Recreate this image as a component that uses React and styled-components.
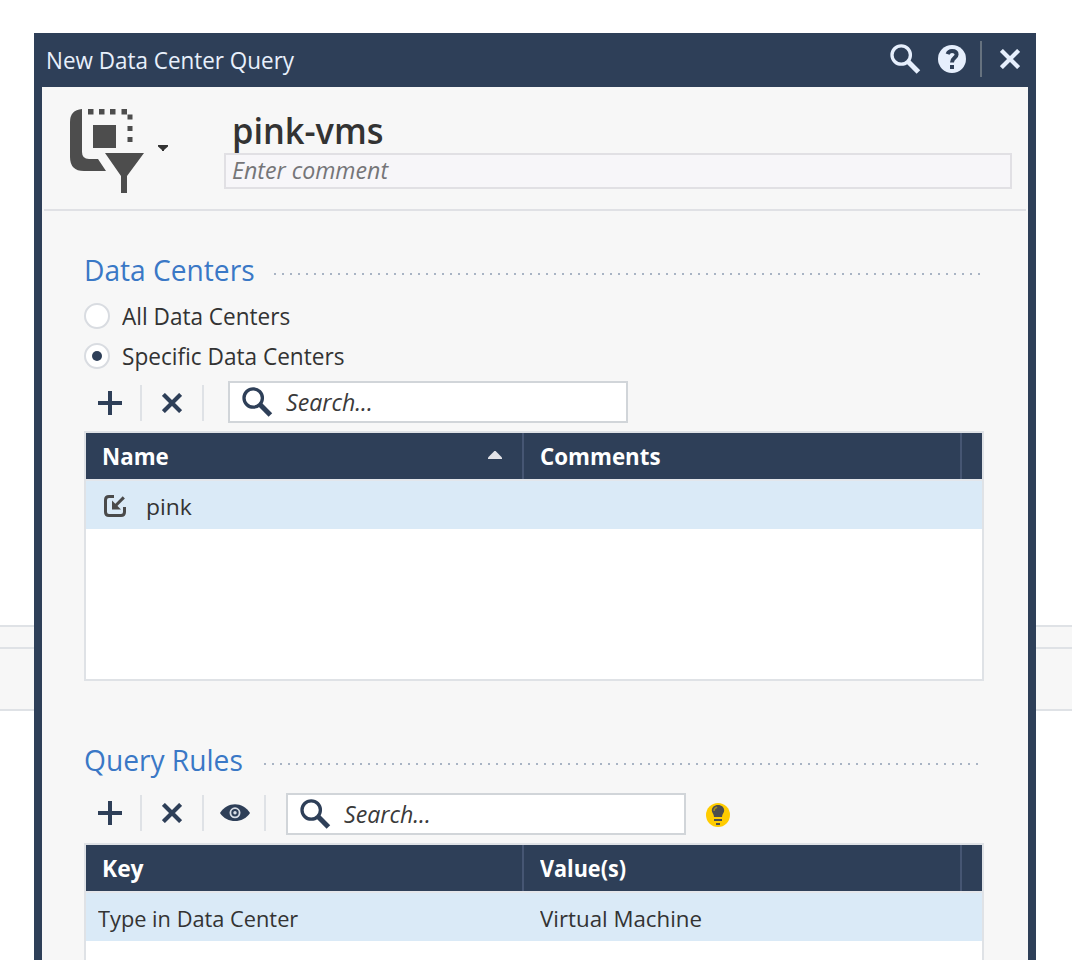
import React from 'react';
import styled, { createGlobalStyle } from 'styled-components';

const navy = '#2e3f58';
const line = '#dfe2e6';
const pane = '#f7f7f7';

const GlobalStyle = createGlobalStyle`
  * { box-sizing: border-box; }
  html, body { margin: 0; background: #fff; }
  body {
    color: #333;
    font-family: 'Open Sans', 'Noto Sans', sans-serif;
    font-size: 24px;
    overflow: hidden;
  }
`;

const Page = styled.div`
  display: grid;
  grid-template-columns: 1072px;
  grid-template-rows: 960px;
  height: 960px;
  overflow: hidden;
  & > * { grid-area: 1 / 1; }
`;

const Backdrop = styled.div`
  margin-top: 625px;
  height: 86px;
  background: ${pane};
  border: solid ${line};
  border-width: 2px 0;
`;

const BackdropBar = styled.div`
  height: 22px;
  border-bottom: 2px solid ${line};
`;

const Dialog = styled.section`
  z-index: 1;
  margin: 33px 0 0 34px;
  width: 1002px;
  height: 960px;
  border: solid ${navy};
  border-width: 0 8px;
  background: ${pane};
`;

const TitleBar = styled.header`
  display: flex;
  align-items: center;
  height: 54px;
  margin: 0 -8px;
  padding: 0 14px 0 12px;
  background: ${navy};
  color: #e8f0fc;
  line-height: 32px;
`;

const Text = styled.span`
  display: inline-block;
  white-space: pre;
  transform: scaleX(${(p) => p.$fit || 1});
  transform-origin: left center;
`;

const TitleTools = styled.div`
  display: flex;
  align-items: center;
  height: 100%;
  margin-left: auto;
  color: #e6effd;
`;

const TitleDivider = styled.i`
  width: 2px;
  height: 36px;
  margin: 0 18px 2px 14px;
  background: #66727f;
`;

const Icon = styled.svg`
  display: block;
  flex: none;
  width: ${(p) => p.$w}px;
  height: ${(p) => p.$h || p.$w}px;
  margin: ${(p) => p.$m || 0};
`;

const ObjectHeader = styled.div`
  display: flex;
  height: 124px;
  margin: 0 2px;
  border-bottom: 2px solid #e0e1e5;
`;

const ObjectIcon = styled.div`
  display: flex;
  width: 180px;
  padding: 20px 0 0 26px;
`;

const Identity = styled.div`
  width: 788px;
  padding-top: 23px;
`;

const ObjectName = styled.div`
  height: 43px;
  padding-left: 8px;
  font-size: 36px;
  font-weight: 600;
  line-height: 41px;
`;

const Comment = styled.div`
  height: 36px;
  padding-left: 6px;
  border: 2px solid #e1e0e4;
  background: #f7f6f9;
  color: #757578;
  font-style: italic;
  line-height: 30px;
`;

const Section = styled.section`
  width: 900px;
  margin: ${(p) => p.$top}px 0 0 42px;
`;

const Heading = styled.h2`
  display: flex;
  align-items: flex-start;
  height: 45px;
  margin: 0;
  color: #3a78c6;
  font-size: 30px;
  font-weight: 400;
  line-height: 38px;
`;

const HeadingLabel = styled.div`
  width: ${(p) => p.$w}px;
`;

const Dots = styled.i`
  flex: none;
  width: ${(p) => p.$w}px;
  height: 2px;
  margin-top: 22px;
  background: repeating-linear-gradient(90deg, #a9b4c4 0 2px, transparent 2px 8px);
`;

const RadioRow = styled.div`
  display: flex;
  align-items: center;
  height: 40px;
  line-height: 40px;
`;

const Radio = styled.i`
  display: grid;
  place-items: center;
  width: 26px;
  height: 26px;
  margin-right: 12px;
  border: 2px solid #d9dce1;
  border-radius: 50%;
  background: #fff;
  &::after {
    content: '';
    width: 10px;
    height: 10px;
    border-radius: 50%;
    background: ${(p) => (p.$on ? navy : 'transparent')};
  }
`;

const Toolbar = styled.div`
  display: flex;
  align-items: flex-start;
  height: 42px;
  margin: ${(p) => p.$top}px 0 8px;
  color: ${navy};
`;

const ToolGroup = styled.div`
  display: flex;
  padding-top: ${(p) => p.$top}px;
`;

const ToolButton = styled.div`
  display: grid;
  place-items: center;
  width: ${(p) => p.$w || 62}px;
  height: 36px;
  border-right: 2px solid ${line};
`;

const SearchBox = styled.div`
  display: flex;
  width: 400px;
  height: 42px;
  margin-left: ${(p) => p.$left}px;
  padding-left: 12px;
  border: 2px solid #d1d5d9;
  background: #fff;
  font-style: italic;
  line-height: 37px;
`;

const Placeholder = styled(Text)`
  color: #3a3a3a;
`;

const Table = styled.div`
  height: 250px;
  border: 2px solid ${line};
  background: #fff;
`;

const Row = styled.div`
  display: grid;
  grid-template-columns: 438px 438px 20px;
  grid-template-rows: 100%;
  height: 48px;
  background: #daeaf7;
  line-height: 51px;
  font-size: 22px;
`;

const HeadRow = styled(Row)`
  border-bottom: 2px solid #e3e6eb;
  background: ${navy};
  color: #fff;
  font-weight: 700;
  font-size: 24px;
  line-height: 46px;
`;

const Cell = styled.div`
  display: flex;
  align-items: flex-start;
  padding-left: ${(p) => p.$pad || 16}px;
`;

const HeadCell = styled(Cell)`
  justify-content: space-between;
  border-right: ${(p) => (p.$last ? 0 : 2)}px solid #465673;
`;

const SearchIcon = ({ m }) => (
  <Icon $w={32} $m={m} viewBox="0 0 32 32" fill="none" stroke="currentColor">
    <circle cx="11.2" cy="12" r="9.2" strokeWidth="3.3" />
    <path d="M18 18.5 28.4 29" strokeWidth="5" />
  </Icon>
);

const CloseIcon = ({ m }) => (
  <Icon $w={20} $m={m} viewBox="0 0 20 20" fill="none" stroke="currentColor">
    <path d="M1.4 1.4 18.6 18.6M18.6 1.4 1.4 18.6" strokeWidth="4.2" />
  </Icon>
);

const PlusIcon = () => (
  <Icon $w={24} $m="0 4px 0 0" viewBox="0 0 24 24" fill="currentColor">
    <path d="M10 0h4v10h10v4H14v10h-4V14H0v-4h10z" />
  </Icon>
);

const HelpIcon = ({ m }) => (
  <Icon $w={28} $m={m} viewBox="0 0 28 28" fill="currentColor">
    <circle cx="14" cy="14" r="14" />
    <path
      d="M9.6 9.2C10.4 6.8 12 6 14 6c2.8 0 4.6 1.2 4.6 3.5 0 3.4-4.6 3.4-4.6 8"
      fill="none" stroke={navy} strokeWidth="4"
    />
    <path d="M12 20h4v4h-4z" fill={navy} />
  </Icon>
);

const EyeIcon = () => (
  <Icon $w={30} $h={20} $m="0 0 0 2px" viewBox="0 0 30 20">
    <path d="M0 10C7-1.6 23-1.6 30 10 23 20.8 7 20.8 0 10z" fill={navy} />
    <circle cx="15" cy="9.8" r="4.6" fill="none" stroke="#d9dee6" strokeWidth="1.8" />
    <circle cx="15" cy="9.8" r="1.7" fill="#d9dee6" />
  </Icon>
);

const BulbIcon = () => (
  <Icon $w={24} $m="10px 0 0 20px" viewBox="0 0 24 24">
    <circle cx="12" cy="12" r="12" fill="#ffcc00" />
    <path d="M12 2c3.8 0 6.2 2.4 6.2 5.6 0 2.3-2.2 3.3-2.2 6.4H8c0-3.1-2.2-4.1-2.2-6.4C5.8 4.4 8.2 2 12 2z" fill="#4d4d4d" />
    <path d="M8 8c0-2.2 1.2-3.4 3.2-3.8" fill="none" stroke="#a28b22" strokeWidth="1.4" />
    <path d="M8 16h8v2H8zM10 20h4v2h-4z" fill="#4d4d4d" />
  </Icon>
);

const QueryIcon = () => (
  <Icon $w={74} $h={86} viewBox="0 0 74 86" fill="#4d4d4d">
    <path d="M12 2v43q0 7 7 7h9l8 12H14Q0 64 0 50V15Q0 3 12 2z" />
    <path d="M23 18h23v23H23z" />
    <path d="M18 2h5.5v5.5H18zM29 2h5.5v5.5H29zM40 2h5.5v5.5H40zM51.5 2h5.5v5.5h-5.5zM57.5 7.5h5v5h-5zM57.5 19h5v5h-5zM57.5 30h5v5h-5z" />
    <path d="M35 46h39L57 69v17h-6V69z" />
  </Icon>
);

const DataCenterIcon = () => (
  <Icon $w={22} $m="14px 20px 0 0" viewBox="0 0 22 22" fill="none" stroke="#4a4a4a">
    <path d="M10 1.5H5Q1.5 1.5 1.5 5v12q0 3.5 3.5 3.5h12q3.5 0 3.5-3.5v-5" strokeWidth="3" />
    <path d="M19.8 2.4 11 11.2" strokeWidth="3" />
    <path d="M8 5.5v9h9z" fill="#4a4a4a" stroke="none" />
  </Icon>
);

export default function App() {
  return (
    <Page>
      <GlobalStyle />
      <Backdrop><BackdropBar /></Backdrop>
      <Dialog>
        <TitleBar>
          <Text $fit={0.935}>New Data Center Query</Text>
          <TitleTools>
            <SearchIcon m="0 16px 2px 0" />
            <HelpIcon m="0 0 2px" />
            <TitleDivider />
            <CloseIcon m="0 2px 2px 0" />
          </TitleTools>
        </TitleBar>

        <ObjectHeader>
          <ObjectIcon>
            <QueryIcon />
            <Icon $w={10} $h={6} $m="38px 0 0 14px" viewBox="0 0 10 6">
              <path d="M0 0h10v1.5L6 5v1H4V5L0 1.5z" fill="#333" />
            </Icon>
          </ObjectIcon>
          <Identity>
            <ObjectName><Text $fit={0.955}>pink-vms</Text></ObjectName>
            <Comment><Text $fit={0.965}>Enter comment</Text></Comment>
          </Identity>
        </ObjectHeader>

        <Section $top={40}>
          <Heading>
            <HeadingLabel $w={190}><Text $fit={0.938}>Data Centers</Text></HeadingLabel>
            <Dots $w={708} />
          </Heading>
          <RadioRow><Radio /><Text $fit={0.94}>All Data Centers</Text></RadioRow>
          <RadioRow><Radio $on /><Text $fit={0.942}>Specific Data Centers</Text></RadioRow>
          <Toolbar $top={5}>
            <ToolGroup $top={4}>
              <ToolButton $w={58}><PlusIcon /></ToolButton>
              <ToolButton><CloseIcon /></ToolButton>
            </ToolGroup>
            <SearchBox $left={24}>
              <SearchIcon m="3px 12px 0 0" />
              <Placeholder $fit={0.965}>Search...</Placeholder>
            </SearchBox>
          </Toolbar>
          <Table>
            <HeadRow>
              <HeadCell>
                <Text $fit={0.93}>Name</Text>
                <Icon $w={14} $h={8} $m="18px 20px 0 0" viewBox="0 0 14 8">
                  <path d="M0 8V6.6L6.4 0h1.2L14 6.6V8z" fill="#e3e3e8" />
                </Icon>
              </HeadCell>
              <HeadCell><Text $fit={0.93}>Comments</Text></HeadCell>
              <HeadCell $last />
            </HeadRow>
            <Row>
              <Cell $pad={18}><DataCenterIcon /><Text $fit={1.04}>pink</Text></Cell>
            </Row>
          </Table>
        </Section>

        <Section $top={60}>
          <Heading>
            <HeadingLabel $w={180}><Text $fit={0.938}>Query Rules</Text></HeadingLabel>
            <Dots $w={714} />
          </Heading>
          <Toolbar $top={7}>
            <ToolGroup $top={2}>
              <ToolButton $w={58}><PlusIcon /></ToolButton>
              <ToolButton><CloseIcon /></ToolButton>
              <ToolButton><EyeIcon /></ToolButton>
            </ToolGroup>
            <SearchBox $left={20}>
              <SearchIcon m="3px 12px 0 0" />
              <Placeholder $fit={0.965}>Search...</Placeholder>
            </SearchBox>
            <BulbIcon />
          </Toolbar>
          <Table>
            <HeadRow>
              <HeadCell $pad={16}><Text $fit={0.95}>Key</Text></HeadCell>
              <HeadCell><Text $fit={0.9}>Value(s)</Text></HeadCell>
              <HeadCell $last />
            </HeadRow>
            <Row>
              <Cell $pad={12}><Text $fit={0.99}>Type in Data Center</Text></Cell>
              <Cell><Text $fit={1.013}>Virtual Machine</Text></Cell>
            </Row>
          </Table>
        </Section>
      </Dialog>
    </Page>
  );
}
